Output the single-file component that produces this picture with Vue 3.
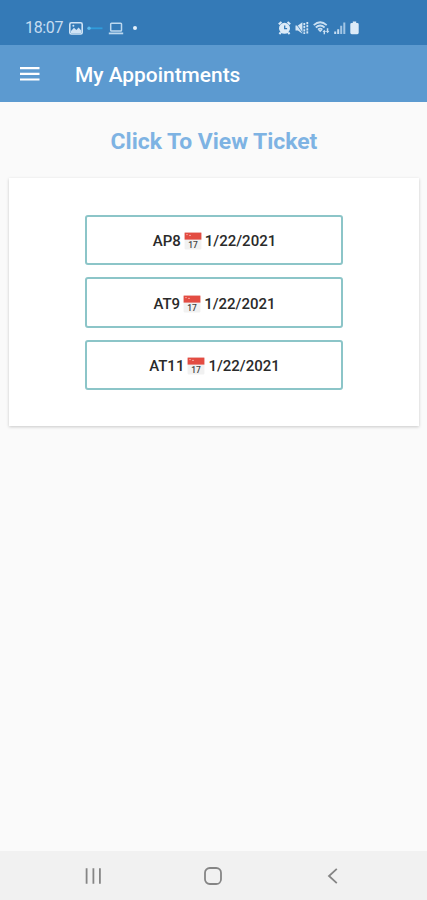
<template>
  <div class="screen">
    <div class="status-bar">
      <span class="clock">18:07</span>
      <svg class="picture" width="14" height="13" viewBox="0 0 14 13">
        <rect x="0.8" y="0.8" width="12.4" height="11.2" rx="1.6" fill="none" stroke="#cfe3f5" stroke-width="1.6" />
        <path d="M2 11V9l3-3.2 2.4 2.3L9.6 5.6l2.6 2.8V11z" fill="#cfe3f5" />
        <circle cx="4.4" cy="3.8" r="1" fill="#cfe3f5" />
      </svg>
      <svg class="dash" width="16" height="13" viewBox="0 0 16 13">
        <path d="M3 6.3h12.5" stroke="#2f9bdb" stroke-width="1.8" />
        <circle cx="2" cy="6.3" r="1.7" fill="#5cbcf0" />
      </svg>
      <svg class="laptop" width="16" height="13" viewBox="0 0 16 13">
        <rect x="2.7" y="1.3" width="10.8" height="7.8" rx="0.8" fill="none" stroke="#bcd8ef" stroke-width="1.5" />
        <path d="M0.8 11.4h14.4" stroke="#bcd8ef" stroke-width="1.8" />
      </svg>
      <span class="dot"></span>
      <div class="system-icons">
        <svg width="13" height="14" viewBox="0 0 13 14">
          <path d="M0.8 3.3 3.5 1M12.2 3.3 9.5 1M2.8 11.5 1.4 13M10.2 11.5l1.4 1.5" stroke="#dcebf8" stroke-width="2" />
          <circle cx="6.5" cy="7.3" r="5.5" fill="#dcebf8" />
          <path d="M6.7 4.4v3.2h2.4" fill="none" stroke="#347ab7" stroke-width="1.3" />
        </svg>
        <svg width="14" height="14" viewBox="0 0 14 14">
          <path d="M0.5 4.6h2.4L7.4 1.2v11.6L2.9 9.4H0.5z" fill="#d3e5f5" />
          <path d="M0.4 1.6 8 12.6" stroke="#347ab7" stroke-width="0.8" />
          <path d="M9.3 2v11M12.3 1v12" stroke="#d3e5f5" stroke-width="1.8" stroke-dasharray="2.2 0.9" />
        </svg>
        <svg width="17" height="14" viewBox="0 0 17 14">
          <g fill="none" stroke="#c9dff2" stroke-width="1.7">
            <path d="M0.7 4.2Q7.2-1.7 13.7 4.2" />
            <path d="M2.8 6.5q4.4-4 8.8 0" />
            <path d="M5 8.7q2.2-2 4.4 0" />
          </g>
          <path d="M5.2 9h4.2l-2.2 2.3z" fill="#c9dff2" />
          <path d="M9.5 10.9 11.3 8.7l1.7 2.2h-1v2.3h-1.4v-2.3zM12.8 10h1V7.3h1.5V10h1.1l-1.8 2.2z" fill="#c9dff2" />
        </svg>
        <svg width="12" height="14" viewBox="0 0 12 14">
          <path d="M1.2 13v-2.5M4.2 13V8.3" stroke="#c6ddf1" stroke-width="2" />
          <path d="M7.2 13V4.8M10.3 13V1.4" stroke="#a1c5e5" stroke-width="2" />
        </svg>
        <svg width="9" height="14" viewBox="0 0 9 14">
          <path d="M2.8 0.6h3.4v1.3h1.1q1.4 0 1.4 1.4v8.5q0 1.4-1.4 1.4H1.7q-1.4 0-1.4-1.4V3.3q0-1.4 1.4-1.4h1.1z" fill="#dcebf8" />
        </svg>
      </div>
    </div>

    <header class="app-bar">
      <svg class="menu" width="20" height="16" viewBox="0 0 20 16">
        <path d="M0 2.1h19.5M0 7.8h19.5M0 13.5h19.5" stroke="#fff" stroke-width="2.2" />
      </svg>
      <h1>My Appointments</h1>
    </header>

    <main>
      <h2>Click To View Ticket</h2>
      <div class="card">
        <button v-for="item in appointments" :key="item.code" class="ticket" type="button">
          <span>{{ item.code }}</span>
          <svg class="calendar" width="18" height="18" viewBox="0 0 18 18">
            <rect x="0.6" y="0.6" width="16.8" height="16.8" rx="0.8" fill="#f1f1f1" />
            <path d="M0.6 0.6h16.8v7H0.6z" fill="#e34c42" />
            <path d="M2.2 2.6h1.6M5 3.4h2" stroke="#f6a49c" stroke-width="1" />
            <text x="9" y="15.6" text-anchor="middle">17</text>
          </svg>
          <span>{{ item.date }}</span>
        </button>
      </div>
    </main>

    <nav class="nav-bar">
      <svg width="18" height="18" viewBox="0 0 18 18">
        <path d="M2.6 1.3v15.4M9.4 1.3v15.4M15.9 1.3v15.4" />
      </svg>
      <svg width="18" height="18" viewBox="0 0 18 18">
        <rect x="1" y="1" width="16" height="16" rx="4.8" />
      </svg>
      <svg width="18" height="18" viewBox="0 0 18 18">
        <path d="M12.8 1.8 5 9l7.8 7.2" />
      </svg>
    </nav>
  </div>
</template>

<script setup>
const appointments = [
  { code: 'AP8', date: '1/22/2021' },
  { code: 'AT9', date: '1/22/2021' },
  { code: 'AT11', date: '1/22/2021' }
]
</script>

<style>
body {
  margin: 0;
}
</style>

<style scoped>
.screen {
  display: flex;
  flex-direction: column;
  width: 427px;
  height: 900px;
  background-color: #fafafa;
  font-family: Roboto, sans-serif;
  overflow: hidden;
}

.status-bar {
  display: flex;
  align-items: center;
  box-sizing: border-box;
  height: 45px;
  padding: 11px 68px 0 25px;
  background-color: #347ab7;
}

.clock {
  width: 44px;
  font-size: 16px;
  line-height: 20px;
  letter-spacing: -0.35px;
  color: #c6ddf1;
}

.dash {
  margin-left: 4px;
}

.laptop {
  margin-left: 5px;
}

.dot {
  width: 4px;
  height: 4px;
  margin-left: 9px;
  border-radius: 50%;
  background-color: #e3f0fb;
}

.system-icons {
  display: flex;
  gap: 4px;
  margin-left: auto;
}

.app-bar {
  display: flex;
  align-items: center;
  box-sizing: border-box;
  height: 57px;
  padding: 0 20px;
  background-color: #5c9ad0;
}

.app-bar h1 {
  margin: 2px 0 0 35px;
  font-size: 20.9px;
  font-weight: 500;
  line-height: 26px;
  color: #fff;
}

main {
  flex: 1;
}

h2 {
  margin: 25px 0 22px;
  padding-left: 1px;
  font-size: 22.9px;
  font-weight: 700;
  line-height: 29px;
  text-align: center;
  color: #7eb3e3;
}

.card {
  display: flex;
  flex-direction: column;
  align-items: center;
  gap: 12px;
  box-sizing: border-box;
  height: 248px;
  margin: 0 8px 0 9px;
  padding-top: 37px;
  background-color: #fff;
  box-shadow: 0 1px 3px rgba(0, 0, 0, 0.2);
}

.ticket {
  display: flex;
  align-items: center;
  justify-content: center;
  gap: 3px;
  box-sizing: border-box;
  width: 258px;
  height: 50.4px;
  padding: 2px 0 0 1px;
  border: 2px solid #8cc5c8;
  border-radius: 3px;
  background-color: #fff;
  font-family: Roboto, sans-serif;
  font-size: 15px;
  font-weight: 500;
  color: #2a2a2a;
}

.calendar text {
  font-family: Roboto, sans-serif;
  font-size: 8.5px;
  font-weight: 500;
  fill: #444;
}

.nav-bar {
  display: flex;
  align-items: center;
  justify-content: space-between;
  box-sizing: border-box;
  height: 49px;
  padding: 0 85px 0 84px;
  background-color: #f1f1f1;
}

.nav-bar svg {
  fill: none;
  stroke: #858585;
  stroke-width: 1.8;
}
</style>
